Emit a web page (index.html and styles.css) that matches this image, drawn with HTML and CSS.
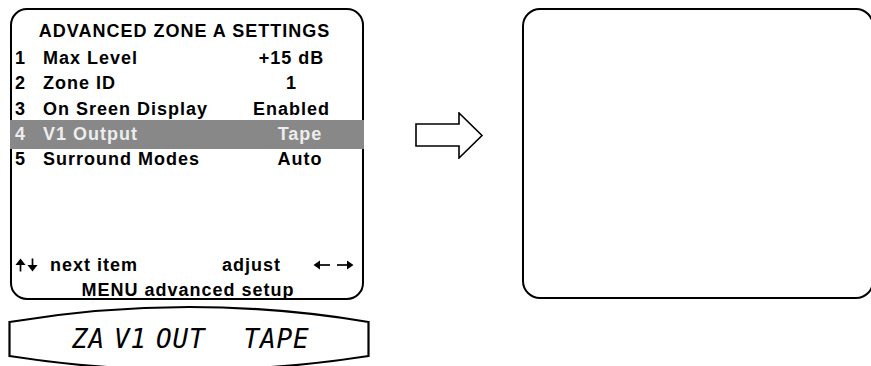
FILE: index.html
```html
<!DOCTYPE html>
<html>
<head>
<meta charset="utf-8">
<link rel="stylesheet" href="styles.css">
</head>
<body>
<div class="page">
  <div class="left">
    <div class="menu">
      <div class="title">ADVANCED ZONE A SETTINGS</div>
      <div class="row"><span class="num">1</span><span class="label">Max Level</span><span class="val">+15 dB</span></div>
      <div class="row"><span class="num">2</span><span class="label">Zone ID</span><span class="val">1</span></div>
      <div class="row"><span class="num">3</span><span class="label">On Sreen Display</span><span class="val">Enabled</span></div>
      <div class="row sel"><span class="num">4</span><span class="label">V1 Output</span><span class="val shift">Tape</span></div>
      <div class="row"><span class="num">5</span><span class="label">Surround Modes</span><span class="val shift">Auto</span></div>
      <div class="foot">
        <div class="foot-line">
          <span class="ud">
            <svg width="24" height="14" viewBox="0 0 24 14"><path d="M5.5 13.5V3" stroke="#000" stroke-width="1.7" fill="none"/><path d="M0.5 7L5.5 0.5 10.5 7Z" fill="#000"/><path d="M17.5 0.5V11" stroke="#000" stroke-width="1.7" fill="none"/><path d="M12.5 7L17.5 13.5 22.5 7Z" fill="#000"/></svg>
          </span>
          <span class="next">next item</span>
          <span class="adjust">adjust</span>
          <span class="lr">
            <svg width="41" height="12" viewBox="0 0 41 12"><path d="M4 6H17" stroke="#000" stroke-width="1.7" fill="none"/><path d="M0.5 6L7 1.5V10.5Z" fill="#000"/><path d="M24 6H37" stroke="#000" stroke-width="1.7" fill="none"/><path d="M40.5 6L34 1.5V10.5Z" fill="#000"/></svg>
          </span>
        </div>
        <div class="foot-menu">MENU advanced setup</div>
      </div>
    </div>
    <div class="lcd">
      <svg class="lcd-shape" width="362" height="72" viewBox="0 0 362 72"><path d="M1.5 22Q181 -8 360.5 22L360.5 56Q181 84 1.5 56Z" fill="none" stroke="#000" stroke-width="2.2"/></svg>
      <div class="lcd-text"><span class="w">ZA</span> <span class="w w2">V1</span> <span class="w w3">OUT</span> <span class="w w4">TAPE</span></div>
    </div>
  </div>
  <svg class="big-arrow" width="69" height="47" viewBox="0 0 69 47"><path d="M1 12H44V1L67 23.5 44 46V34H1Z" fill="#fff" stroke="#000" stroke-width="1.6" stroke-linejoin="miter"/></svg>
  <div class="screen"></div>
</div>
</body>
</html>
```

FILE: styles.css
```css
html, body {
  margin: 0;
  padding: 0;
  background: #fff;
}
body {
  width: 871px;
  height: 366px;
  overflow: hidden;
  font-family: "Liberation Sans", Arial, sans-serif;
  font-weight: bold;
  color: #000;
}
.page {
  display: flex;
  align-items: flex-start;
  padding: 8px 0 0 8px;
}
.page > * {
  flex-shrink: 0;
}
.left {
  width: 362px;
  display: flex;
  flex-direction: column;
}
.menu {
  box-sizing: border-box;
  margin-left: 2px;
  width: 354px;
  height: 292px;
  border: 2px solid #000;
  border-radius: 17px;
  font-size: 18px;
  letter-spacing: 1px;
  line-height: 25.2px;
}
.title {
  padding-top: 9px;
  padding-right: 5px;
  margin-bottom: 2px;
  text-align: center;
}
.row {
  display: grid;
  grid-template-columns: 28px 1fr 103px;
  padding: 0 19px 0 3px;
}
.row.sel {
  background: #888888;
  color: #ededed;
  margin: -1.5px -2px;
  padding: 1.5px 21px 1.5px 5px;
}
.val {
  text-align: center;
}
.val.shift {
  padding-left: 17px;
}
.foot {
  margin-top: 80.6px;
}
.foot-line {
  display: flex;
  align-items: center;
  padding-left: 3px;
}
.ud {
  width: 35px;
  display: flex;
  align-items: center;
}
.ud svg, .lr svg {
  display: block;
}
.next {
  width: 172px;
}
.adjust {
  width: 91px;
}
.lr {
  display: flex;
  align-items: center;
}
.foot-menu {
  text-align: center;
  padding-left: 2px;
}
.lcd {
  position: relative;
  height: 66px;
}
.lcd-shape {
  position: absolute;
  left: 0;
  top: 0;
}
.lcd-text {
  position: relative;
  display: flex;
  padding-top: 26px;
  padding-left: 64px;
  font-family: "DejaVu Sans Mono", monospace;
  font-weight: normal;
  font-style: italic;
  font-size: 26px;
  line-height: 26px;
  letter-spacing: 0.85px;
  white-space: nowrap;
}
.w2 {
  margin-left: 9px;
}
.w3 {
  margin-left: 9px;
}
.w4 {
  margin-left: 38px;
}
.big-arrow {
  display: block;
  margin-left: 45px;
  margin-top: 104px;
}
.screen {
  box-sizing: border-box;
  margin-left: 38px;
  width: 352px;
  height: 291px;
  border: 2px solid #000;
  border-radius: 18px;
}
```
